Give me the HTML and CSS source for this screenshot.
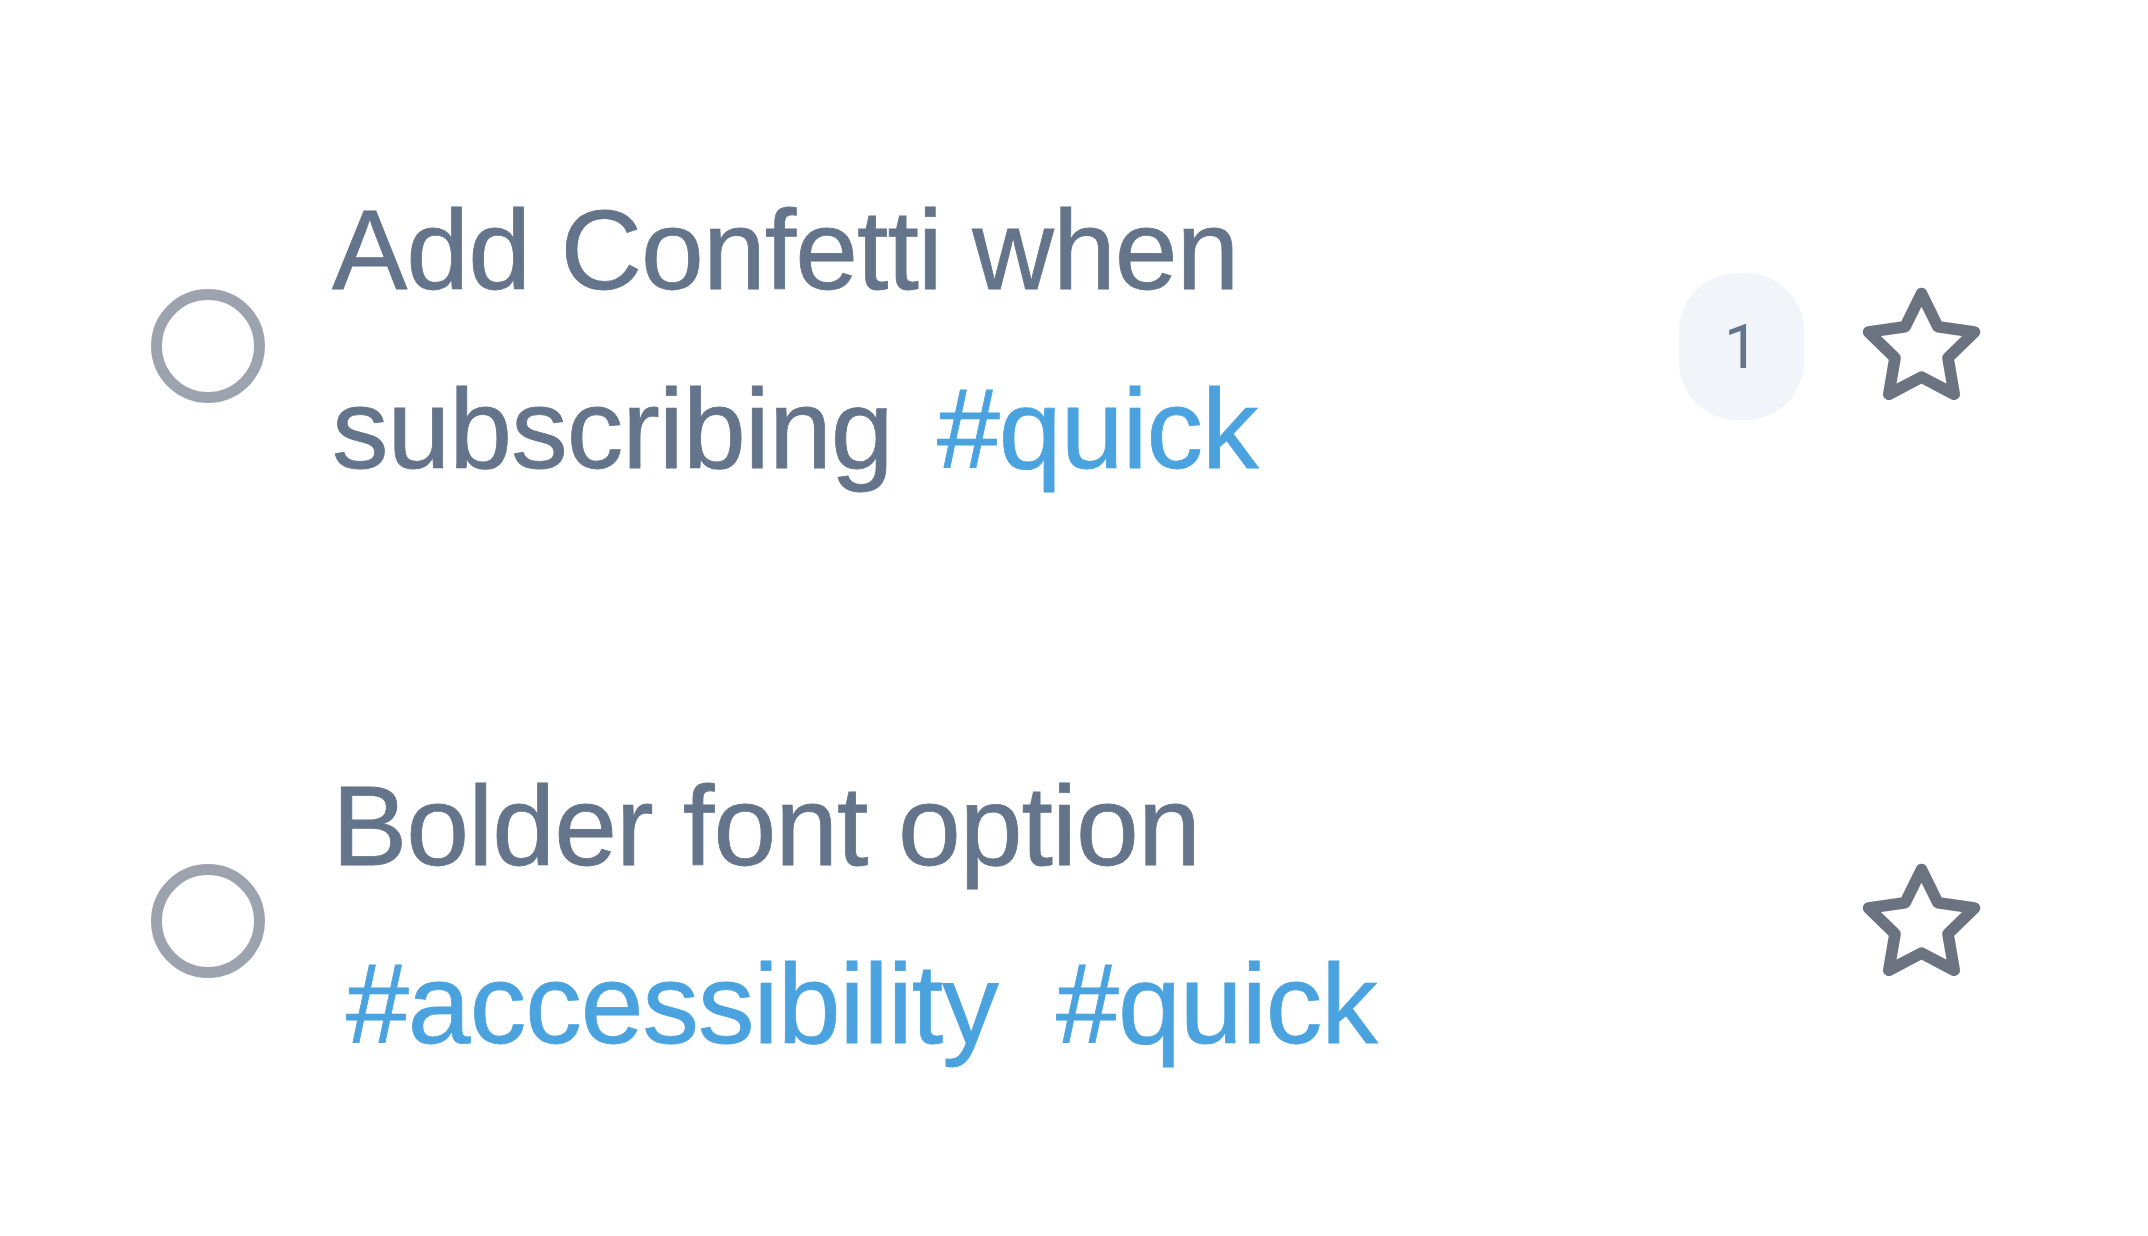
FILE: index.html
```html
<!DOCTYPE html>
<html lang="en">
<head>
<meta charset="utf-8">
<title>Tasks</title>
<link rel="stylesheet" href="styles.css">
</head>
<body>
<ul class="list">
  <li class="row">
    <span class="check"></span>
    <div class="text">Add Confetti when subscribing <span class="tag">#quick</span></div>
    <span class="badge">1</span>
    <svg class="star" viewBox="0 0 24 24" fill="none" stroke="currentColor" stroke-width="2.2" stroke-linecap="round" stroke-linejoin="round"><polygon points="12 2 15.09 8.26 22 9.27 17 14.14 18.18 21.02 12 17.77 5.82 21.02 7 14.14 2 9.27 8.91 8.26 12 2"/></svg>
  </li>
  <li class="row">
    <span class="check"></span>
    <div class="text">Bolder font option <span class="tag">#accessibility</span> <span class="tag">#quick</span></div>
    <svg class="star" viewBox="0 0 24 24" fill="none" stroke="currentColor" stroke-width="2.2" stroke-linecap="round" stroke-linejoin="round"><polygon points="12 2 15.09 8.26 22 9.27 17 14.14 18.18 21.02 12 17.77 5.82 21.02 7 14.14 2 9.27 8.91 8.26 12 2"/></svg>
  </li>
</ul>
</body>
</html>
```

FILE: styles.css
```css
* {
  box-sizing: border-box;
}

html, body {
  margin: 0;
  padding: 0;
  background: #ffffff;
}

body {
  font-family: "Liberation Sans", Arial, sans-serif;
}

.list {
  list-style: none;
  margin: 0;
  padding: 56px 0 0 0;
}

.row {
  display: flex;
  align-items: center;
  padding: 105px 163px 105px 151px;
}

.check {
  flex: none;
  width: 114px;
  height: 114px;
  border: 11px solid #9ca3af;
  border-radius: 50%;
  margin-top: 4px;
  margin-right: 67px;
}

.text {
  flex: 1;
  min-width: 0;
  font-size: 113px;
  letter-spacing: -1px;
  line-height: 178.75px;
  color: #64748b;
  -webkit-text-stroke: 0.8px #64748b;
  padding-bottom: 8px;
  margin-right: 60px;
}

.tag {
  color: #4aa3df;
  -webkit-text-stroke: 0.8px #4aa3df;
  margin: 0 14px;
}

.badge {
  flex: none;
  width: 125px;
  height: 147px;
  border-radius: 58px;
  background: #f1f5f9;
  color: #64748b;
  font-family: Roboto, "Liberation Sans", sans-serif;
  font-size: 62px;
  display: flex;
  align-items: center;
  justify-content: center;
  margin-top: 6px;
  margin-right: 54px;
}

.star {
  flex: none;
  width: 127px;
  height: 127px;
  margin-top: 6px;
  color: #6b7280;
}
```
